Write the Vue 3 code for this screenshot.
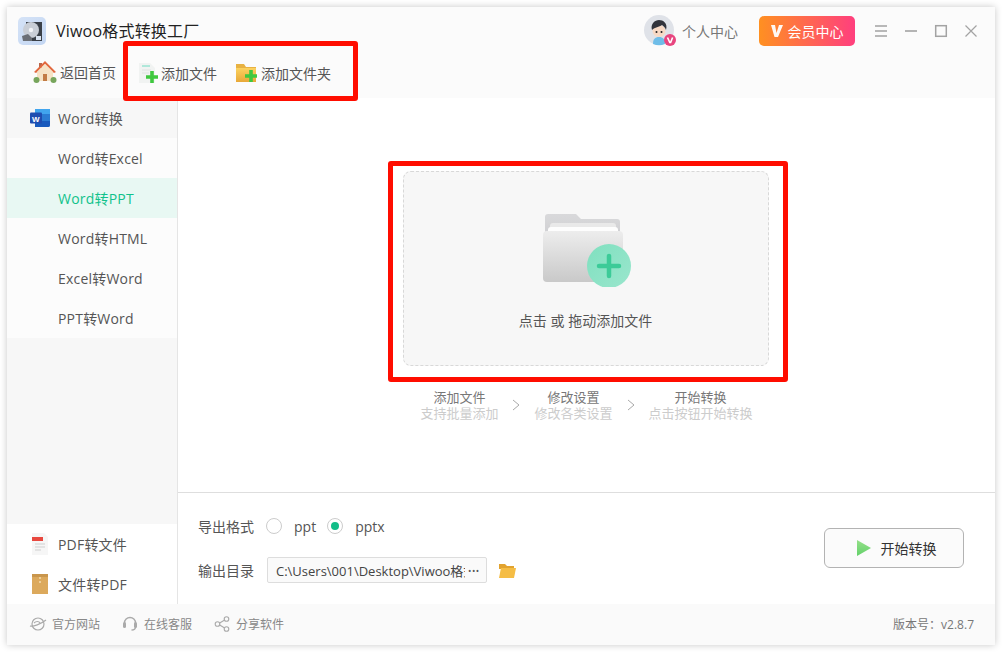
<script setup>
const subItems = [
  { label: 'Word转Excel' },
  { label: 'Word转PPT', active: true },
  { label: 'Word转HTML' },
  { label: 'Excel转Word' },
  { label: 'PPT转Word' }
]
const steps = [
  { title: '添加文件', desc: '支持批量添加' },
  { title: '修改设置', desc: '修改各类设置' },
  { title: '开始转换', desc: '点击按钮开始转换' }
]
</script>

<template>
  <div class="page">
    <div class="window">
      <header class="head">
        <div class="title-row">
          <svg class="logo" width="28" height="28" viewBox="0 0 28 28">
            <defs>
              <linearGradient id="lg" x1="0" y1="0" x2="1" y2="1"><stop offset="0" stop-color="#d5e3f7"/><stop offset="1" stop-color="#c3d6f2"/></linearGradient>
            </defs>
            <rect width="28" height="28" rx="5" fill="url(#lg)"/>
            <path d="M8 5h16v19H8z" fill="#3a4048"/>
            <circle cx="13" cy="13" r="8" fill="#c9ced6"/>
            <circle cx="13" cy="13" r="2.2" fill="#f2f4f7"/>
            <path d="M4 19l6-2 4 4v3H5z" fill="#6b6f76"/>
            <path d="M18 19h5v4h-5z" fill="#d9e3f0"/>
          </svg>
          <span class="app-name">Viwoo格式转换工厂</span>
          <div class="spacer"></div>
          <div class="user">
            <svg class="avatar" width="32" height="32" viewBox="0 0 32 32">
              <circle cx="15" cy="15" r="15" fill="#dfe2e8"/>
              <path d="M9 29c0-5 2-7 6-7s6 2 6 7a15 15 0 0 1-12 0z" fill="#6fbde8"/>
              <ellipse cx="15" cy="16" rx="6.500" ry="6" fill="#f8d9c4"/>
              <path d="M8 15c-2-6 3-10 7-10s9 3 7 10c-1-3-3-4-4-5-3 2-7 2-10 5z" fill="#32343c"/>
              <circle cx="12.500" cy="17" r="1" fill="#222"/><circle cx="17.500" cy="17" r="1" fill="#222"/>
              <circle cx="26" cy="25" r="6" fill="#e8457f"/>
              <path d="M23.500 22.500l2.300 5h.8l2-5" fill="none" stroke="#fff" stroke-width="1.600"/>
            </svg>
            <span class="user-text">个人中心</span>
          </div>
          <div class="vip">
            <svg width="12" height="14" viewBox="0 0 12 14"><path d="M0 1h4l1.500 8L8 1h4L7 13H3.500z" fill="#fff" opacity=".95"/></svg>
            <span>会员中心</span>
          </div>
          <div class="win-btns">
            <svg width="14" height="14" viewBox="0 0 14 14"><path d="M1 2h12M1 7h12M1 12h12" stroke="#a3a3a3" stroke-width="1.400" fill="none"/></svg>
            <svg width="14" height="14" viewBox="0 0 14 14"><path d="M1 7h12" stroke="#a3a3a3" stroke-width="1.600" fill="none"/></svg>
            <svg width="14" height="14" viewBox="0 0 14 14"><rect x="1.700" y="1.700" width="10.600" height="10.600" stroke="#a3a3a3" stroke-width="1.500" fill="none"/></svg>
            <svg width="14" height="14" viewBox="0 0 14 14"><path d="M1.500 1.500l11 11M12.500 1.500l-11 11" stroke="#a3a3a3" stroke-width="1.200" fill="none"/></svg>
          </div>
        </div>
        <div class="tool-row">
          <div class="tool home">
            <svg width="24" height="24" viewBox="0 0 24 24">
              <path d="M6 3h3v5H6z" fill="#b8664a"/>
              <path d="M12 1L1 12l2 1 9-9 9 9 2-1z" fill="#e2693f"/>
              <path d="M4 12l8-8 8 8v9H4z" fill="#f6e3c6"/>
              <path d="M10 14h4v7h-4z" fill="#c27b45"/>
              <circle cx="3.500" cy="20" r="3" fill="#77a55c"/><circle cx="20.500" cy="20" r="3" fill="#77a55c"/>
            </svg>
            <span>返回首页</span>
          </div>
          <div class="tool file">
            <svg width="21" height="22" viewBox="0 0 21 22">
              <path d="M1 1h11l5 5v15H1z" fill="#f1f3f2"/>
              <path d="M4 4h8" stroke="#6fdcc2" stroke-width="1"/>
              <path d="M4 8h9M4 11h7" stroke="#dfe3e2" stroke-width="1"/>
              <path d="M14 9v12M8 15h12" stroke="#3fc83f" stroke-width="3.600"/>
            </svg>
            <span>添加文件</span>
          </div>
          <div class="tool folder">
            <svg width="23" height="20" viewBox="0 0 23 20">
              <defs><linearGradient id="fg" x1="0" y1="0" x2="0" y2="1"><stop offset="0" stop-color="#fbd25f"/><stop offset="1" stop-color="#e8a838"/></linearGradient></defs>
              <path d="M1 1h8l2 3h10v14H1z" fill="#e8b243"/>
              <path d="M1 5h20v14H1z" fill="url(#fg)"/>
              <path d="M16 7v12M10 13h12" stroke="#3fc83f" stroke-width="3.600"/>
            </svg>
            <span>添加文件夹</span>
          </div>
        </div>
      </header>

      <div class="body">
        <aside class="side">
          <div class="side-head">
            <svg width="20" height="18" viewBox="0 0 20 18">
              <path d="M5 0h13a2 2 0 0 1 2 2v14a2 2 0 0 1-2 2H5z" fill="#2b7cd3"/>
              <path d="M5 0h15v5H5z" fill="#41a5ee"/>
              <path d="M5 12h15v4a2 2 0 0 1-2 2H5z" fill="#185abd"/>
              <rect y="3.500" width="12" height="11" rx="1" fill="#1f4db0"/>
              <text x="6" y="12.500" class="word-w">W</text>
            </svg>
            <span>Word转换</span>
          </div>
          <div
            v-for="item in subItems"
            :key="item.label"
            class="sub"
            :class="{ on: item.active }"
          >{{ item.label }}</div>
          <div class="side-fill"></div>
          <div class="side-link">
            <svg width="18" height="22" viewBox="0 0 18 22">
              <path d="M1 0h12l4 4v18H1z" fill="#f6f6f6"/>
              <rect x="1" y="4" width="11" height="4" fill="#e8483f"/>
              <path d="M4 11h10M4 14h10M4 17h6" stroke="#cfcfcf" stroke-width="1"/>
            </svg>
            <span>PDF转文件</span>
          </div>
          <div class="side-link">
            <svg width="18" height="21" viewBox="0 0 18 21">
              <rect width="16" height="20" x="1" fill="#dca95c"/>
              <rect width="16" height="3" x="1" fill="#c9964c"/>
              <path d="M9 3v6" stroke="#f3dcae" stroke-width="1.500" stroke-dasharray="2 2"/>
            </svg>
            <span>文件转PDF</span>
          </div>
        </aside>

        <main class="main">
          <section class="work">
            <div class="drop">
              <svg width="92" height="76" viewBox="0 0 92 76" class="drop-ico">
                <defs>
                  <linearGradient id="fold" x1="0" y1="0" x2="0" y2="1"><stop offset="0" stop-color="#ededed"/><stop offset="1" stop-color="#c9c9c9"/></linearGradient>
                  <linearGradient id="back" x1="0" y1="0" x2="0" y2="1"><stop offset="0" stop-color="#d9d9db"/><stop offset="1" stop-color="#c8c9cc"/></linearGradient>
                  <linearGradient id="plus" x1="0" y1="0" x2="1" y2="1"><stop offset="0" stop-color="#7fe0bf"/><stop offset="1" stop-color="#9ae6cd"/></linearGradient>
                </defs>
                <path d="M4 6a3 3 0 0 1 3-3h28l5 5h36a3 3 0 0 1 3 3v30H4z" fill="url(#back)"/>
                <rect x="9" y="12" width="66" height="24" rx="3" fill="#e9e9e9"/>
                <rect x="7" y="16" width="70" height="24" rx="3" fill="#fdfdfd"/>
                <path d="M2 24a4 4 0 0 1 4-4h72a4 4 0 0 1 4 4v43a4 4 0 0 1-4 4H6a4 4 0 0 1-4-4z" fill="url(#fold)"/>
                <circle cx="68" cy="55" r="22" fill="url(#plus)"/>
                <path d="M68 45v20M58 55h20" stroke="#3ccb98" stroke-width="4.500" stroke-linecap="round"/>
              </svg>
              <p class="drop-text">点击 或 拖动添加文件</p>
            </div>
            <div class="steps">
              <template v-for="(s, i) in steps" :key="s.title">
                <div class="step">
                  <div class="step-t">{{ s.title }}</div>
                  <div class="step-d">{{ s.desc }}</div>
                </div>
                <svg v-if="i < 2" class="chev" width="8" height="12" viewBox="0 0 8 12"><path d="M1 1l6 5-6 5" fill="none" stroke="#a9a9a9" stroke-width="1"/></svg>
              </template>
            </div>
          </section>

          <section class="bottom">
            <div class="opts">
              <div class="opt-row">
                <span class="lbl">导出格式</span>
                <span class="radio"></span>
                <span class="rtext">ppt</span>
                <span class="radio checked"></span>
                <span class="rtext">pptx</span>
              </div>
              <div class="opt-row second">
                <span class="lbl">输出目录</span>
                <div class="path">
                  <span class="path-text">C:\Users\001\Desktop\Viwoo格式</span>
                  <span class="dots">•••</span>
                </div>
                <svg class="open" width="18" height="15" viewBox="0 0 18 15">
                  <path d="M1 1h6l2 2h7v3H1z" fill="#e2a32f"/>
                  <path d="M3 5h15l-2 10H1z" fill="#f5bd45"/>
                </svg>
              </div>
            </div>
            <button class="start">
              <svg width="16" height="18" viewBox="0 0 16 18">
                <defs><linearGradient id="pl" x1="0" y1="0" x2="0" y2="1"><stop offset="0" stop-color="#96e08a"/><stop offset="1" stop-color="#63d16a"/></linearGradient></defs>
                <path d="M1 1l14 8-14 8z" fill="url(#pl)"/>
              </svg>
              <span>开始转换</span>
            </button>
          </section>
        </main>
      </div>

      <footer class="foot">
        <div class="foot-link">
          <svg width="18" height="16" viewBox="0 0 18 16"><circle cx="9" cy="8" r="6" fill="none" stroke="#aaa" stroke-width="1.200"/><path d="M1 10c3 1 11-2 16-6M5 7c2-2 5-2 6 0" fill="none" stroke="#aaa" stroke-width="1.200"/></svg>
          <span>官方网站</span>
        </div>
        <div class="foot-link">
          <svg width="16" height="16" viewBox="0 0 16 16"><path d="M2.500 9V7a5.500 5.500 0 0 1 11 0v4c0 2-2 3-4 3" fill="none" stroke="#aaa" stroke-width="1.400"/><rect x="1" y="6" width="3" height="6" rx="1.500" fill="#aaa"/><rect x="12" y="6" width="3" height="6" rx="1.500" fill="#aaa"/></svg>
          <span>在线客服</span>
        </div>
        <div class="foot-link">
          <svg width="16" height="16" viewBox="0 0 16 16"><path d="M11.500 3.500L4 8l7.500 4.500" fill="none" stroke="#aaa" stroke-width="1.100"/><circle cx="3.500" cy="8" r="2.300" fill="#fafafa" stroke="#aaa" stroke-width="1.100"/><circle cx="12.500" cy="3" r="2.300" fill="#fafafa" stroke="#aaa" stroke-width="1.100"/><circle cx="12.500" cy="13" r="2.300" fill="#fafafa" stroke="#aaa" stroke-width="1.100"/></svg>
          <span>分享软件</span>
        </div>
        <div class="spacer"></div>
        <span class="ver">版本号：v2.8.7</span>
      </footer>
    </div>
    <div class="mark mark-tool"></div>
    <div class="mark mark-drop"></div>
  </div>
</template>

<style>
html, body { margin: 0; background: #fff; }
</style>

<style scoped>
.page {
  position: relative;
  width: 1002px;
  height: 652px;
  padding: 7px;
  box-sizing: border-box;
  background: #fff;
  overflow: hidden;
  font-family: "Open Sans", "Noto Sans CJK SC", sans-serif;
  color: #555;
  font-size: 14px;
}
.window {
  width: 988px;
  height: 638px;
  display: flex;
  flex-direction: column;
  background: #fff;
  box-shadow: 0 0 7px rgba(0, 0, 0, .22);
}
.head { height: 91px; background: #fbfbfb; flex: none; }
.title-row { height: 47px; display: flex; align-items: center; padding-left: 11px; box-sizing: border-box; }
.logo { margin-right: 10px; flex: none; }
.app-name { font-size: 16px; color: #222; letter-spacing: .2px; margin-top: -1px; }
.spacer { flex: 1; }
.user { display: flex; align-items: center; margin-right: 21px; }
.avatar { margin-right: 6px; }
.user-text { font-size: 14px; color: #777; }
.vip {
  width: 96px;
  height: 30px;
  border-radius: 5px;
  background: linear-gradient(90deg, #ff9021, #ff3f7e);
  color: #fff;
  display: flex;
  align-items: center;
  justify-content: center;
  gap: 5px;
  font-size: 14px;
  margin-right: 19px;
}
.win-btns { display: flex; gap: 16px; margin-right: 17px; }
.tool-row { height: 44px; display: flex; align-items: center; padding-bottom: 6px; box-sizing: border-box; }
.tool { display: flex; align-items: center; font-size: 14px; color: #555; }
.home { margin-left: 26px; gap: 3px; margin-top: -2px; }
.file { margin-left: 22px; gap: 2px; }
.folder { margin-left: 18px; gap: 3px; }
.body { flex: 1; display: flex; min-height: 0; }
.side {
  width: 170px;
  flex: none;
  display: flex;
  flex-direction: column;
  border-right: 1px solid #e5e5e5;
  background: #fff;
  letter-spacing: .2px;
}
.side-head {
  height: 40px;
  flex: none;
  display: flex;
  align-items: center;
  gap: 8px;
  padding-left: 23px;
  background: #f7f7f7;
  color: #555;
}
.word-w { font: 700 8px "Liberation Sans", sans-serif; fill: #fff; text-anchor: middle; }
.sub {
  height: 40px;
  flex: none;
  line-height: 42px;
  padding-left: 51px;
  background: #fcfcfc;
  color: #555;
}
.sub.on { background: #e8f8f3; color: #11c28b; }
.side-fill { flex: 1; background: #f7f7f7; }
.side-link {
  height: 40px;
  flex: none;
  display: flex;
  align-items: center;
  padding-left: 24px;
  gap: 9px;
  color: #555;
}
.main { flex: 1; display: flex; flex-direction: column; min-width: 0; }
.work { flex: 1; display: flex; flex-direction: column; align-items: center; padding: 73px 2px 0 0; }
.drop {
  width: 366px;
  height: 195px;
  box-sizing: border-box;
  border: 1px dashed #d8d8d8;
  border-radius: 8px;
  background: #f7f7f7;
  display: flex;
  flex-direction: column;
  align-items: center;
  padding-top: 39px;
}
.drop-ico { flex: none; margin-left: 2px; }
.drop-text { margin: 24px 0 0; font-size: 14px; color: #555; line-height: 20px; }
.steps { display: flex; align-items: center; margin: 23px 0 0 2px; }
.step { text-align: center; line-height: 16px; font-size: 13px; }
.step-t { color: #777; }
.step-d { color: #ccc; }
.chev { margin: 0 14px; flex: none; }
.bottom {
  height: 112px;
  flex: none;
  border-top: 1px solid #dedede;
  display: flex;
  align-items: center;
  justify-content: space-between;
  padding: 0 31px 0 20px;
  box-sizing: border-box;
}
.opts { display: flex; flex-direction: column; align-self: flex-start; margin-top: 20px; }
.opt-row { display: flex; align-items: center; height: 26px; }
.opt-row.second { margin-top: 18px; }
.lbl { font-size: 14px; color: #555; margin-right: 12px; }
.radio {
  width: 14px;
  height: 14px;
  border: 1px solid #ccc;
  border-radius: 50%;
  background: #fff;
  box-sizing: content-box;
  position: relative;
  flex: none;
}
.radio.checked::after {
  content: "";
  position: absolute;
  inset: 3px;
  border-radius: 50%;
  background: #12bd88;
}
.rtext { font-size: 14px; color: #555; margin: 0 11px 0 12px; }
.second .lbl { margin-right: 13px; }
.path {
  width: 220px;
  height: 26px;
  box-sizing: border-box;
  border: 1px solid #ddd;
  border-radius: 2px;
  background: #fafafa;
  display: flex;
  align-items: center;
  padding: 0 4px 0 8px;
  font-size: 13px;
  color: #444;
}
.path-text { flex: 1; min-width: 0; overflow: hidden; white-space: nowrap; }
.dots { flex: none; width: 14px; font-size: 9px; letter-spacing: .5px; color: #555; margin-left: 3px; overflow: hidden; white-space: nowrap; }
.open { margin-left: 11px; }
.start {
  width: 140px;
  height: 40px;
  border: 1px solid #b3b3b3;
  border-radius: 6px;
  background: #fbfbfb;
  display: flex;
  align-items: center;
  justify-content: center;
  gap: 9px;
  font: 14px "Open Sans", "Noto Sans CJK SC", sans-serif;
  color: #333;
  padding: 0 0 0 4px;
  margin-top: -1px;
}
.foot {
  height: 41px;
  flex: none;
  display: flex;
  align-items: center;
  background: #fafafa;
  padding: 0 21px 2px 22px;
  box-sizing: border-box;
  font-size: 12px;
  color: #888;
}
.foot-link { display: flex; align-items: center; gap: 5px; margin-right: 22px; }
.foot-link + .foot-link { gap: 6px; }
.ver { color: #777; }
.mark { position: absolute; border: 5px solid #ff0d00; border-radius: 3px; box-sizing: border-box; pointer-events: none; }
.mark-tool { left: 123px; top: 41px; width: 235px; height: 60px; }
.mark-drop { left: 388px; top: 161px; width: 400px; height: 221px; }
</style>
